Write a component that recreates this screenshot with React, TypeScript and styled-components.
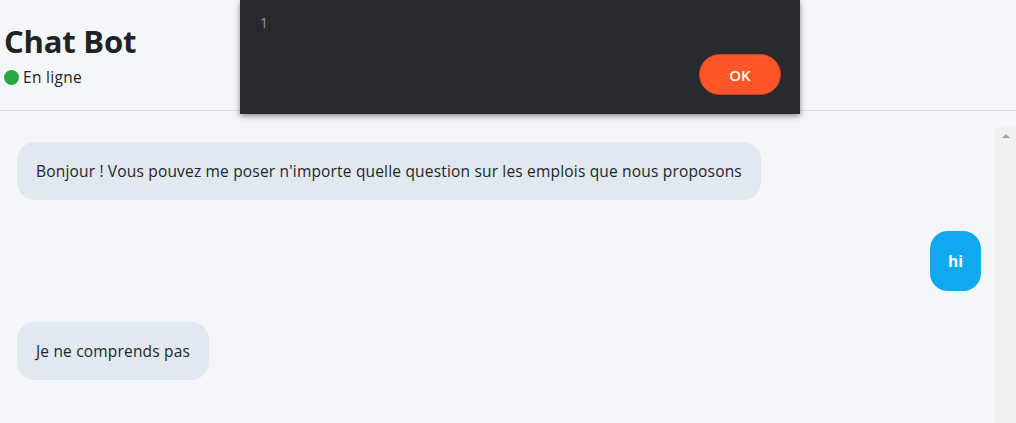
import styled, { createGlobalStyle } from 'styled-components';

const GlobalStyle = createGlobalStyle`
  html, body {
    margin: 0;
    padding: 0;
    background: #f4f7fa;
    font-family: 'Open Sans', 'Noto Sans', sans-serif;
    color: #1f2328;
  }
`;

const Page = styled.div`
  height: 423px;
  display: flex;
  flex-direction: column;
  overflow: hidden;
`;

const Header = styled.header`
  height: 111px;
  border-bottom: 1px solid #dadde1;
  padding: 21px 0 0 4px;
  box-sizing: border-box;
`;

const Title = styled.h1`
  margin: 0;
  font-size: 31px;
  font-weight: 700;
  line-height: 40px;
  letter-spacing: -0.2px;
  color: #202226;
`;

const Status = styled.div`
  display: flex;
  align-items: center;
  gap: 4px;
  margin-top: 5px;
  font-size: 15.5px;
  letter-spacing: 0.3px;
  color: #202226;
`;

const Dot = styled.span`
  width: 15px;
  height: 15px;
  border-radius: 50%;
  background: #27a844;
`;

const Body = styled.div`
  flex: 1;
  display: flex;
  padding-top: 16px;
`;

const Messages = styled.div`
  flex: 1;
  display: flex;
  flex-direction: column;
  gap: 31px;
  padding: 15px 14px 0 17px;
`;

interface BubbleProps {
  $me?: boolean;
}

const Bubble = styled.div<BubbleProps>`
  align-self: ${({ $me }) => ($me ? 'flex-end' : 'flex-start')};
  background: ${({ $me }) => ($me ? '#12a8ef' : '#e2e8f0')};
  color: ${({ $me }) => ($me ? '#ffffff' : '#22262b')};
  font-weight: ${({ $me }) => ($me ? 700 : 400)};
  font-size: 15.5px;
  letter-spacing: ${({ $me }) => ($me ? '0' : '0.18px')};
  line-height: 20px;
  padding: ${({ $me }) => ($me ? '20px 18px' : '19px 19px')};
  border-radius: 18px;
`;

const ScrollTrack = styled.div`
  width: 21px;
  background: #f1f1f1;
  display: flex;
  justify-content: center;
  padding-top: 7px;
  box-sizing: border-box;
`;

const ArrowUp = styled.span`
  width: 0;
  height: 0;
  border-left: 4px solid transparent;
  border-right: 4px solid transparent;
  border-bottom: 4px solid #a3a3a3;
`;

const Dialog = styled.div`
  position: absolute;
  top: 0;
  left: 240px;
  width: 560px;
  height: 114px;
  background: #28292d;
  box-shadow: 0 2px 6px rgba(0, 0, 0, 0.45);
  display: flex;
  flex-direction: column;
  padding: 14px 19px 19px 20px;
  box-sizing: border-box;
`;

const LineNo = styled.div`
  font-family: 'Open Sans', sans-serif;
  font-size: 14px;
  line-height: 18px;
  color: #8c9e9b;
`;

const OkButton = styled.button`
  align-self: flex-end;
  margin-top: auto;
  width: 82px;
  height: 41px;
  border: 1px solid #c7452a;
  border-radius: 21px;
  background: #ff5629;
  color: #ffffff;
  font-family: 'Open Sans', sans-serif;
  font-weight: 600;
  font-size: 15px;
`;

export default function App() {
  return (
    <>
      <GlobalStyle />
      <Page>
        <Header>
          <Title>Chat Bot</Title>
          <Status>
            <Dot />
            En ligne
          </Status>
        </Header>
        <Body>
          <Messages>
            <Bubble>
              Bonjour ! Vous pouvez me poser n'importe quelle question sur les emplois que nous proposons
            </Bubble>
            <Bubble $me>hi</Bubble>
            <Bubble>Je ne comprends pas</Bubble>
          </Messages>
          <ScrollTrack>
            <ArrowUp />
          </ScrollTrack>
        </Body>
      </Page>
      <Dialog>
        <LineNo>1</LineNo>
        <OkButton>OK</OkButton>
      </Dialog>
    </>
  );
}
